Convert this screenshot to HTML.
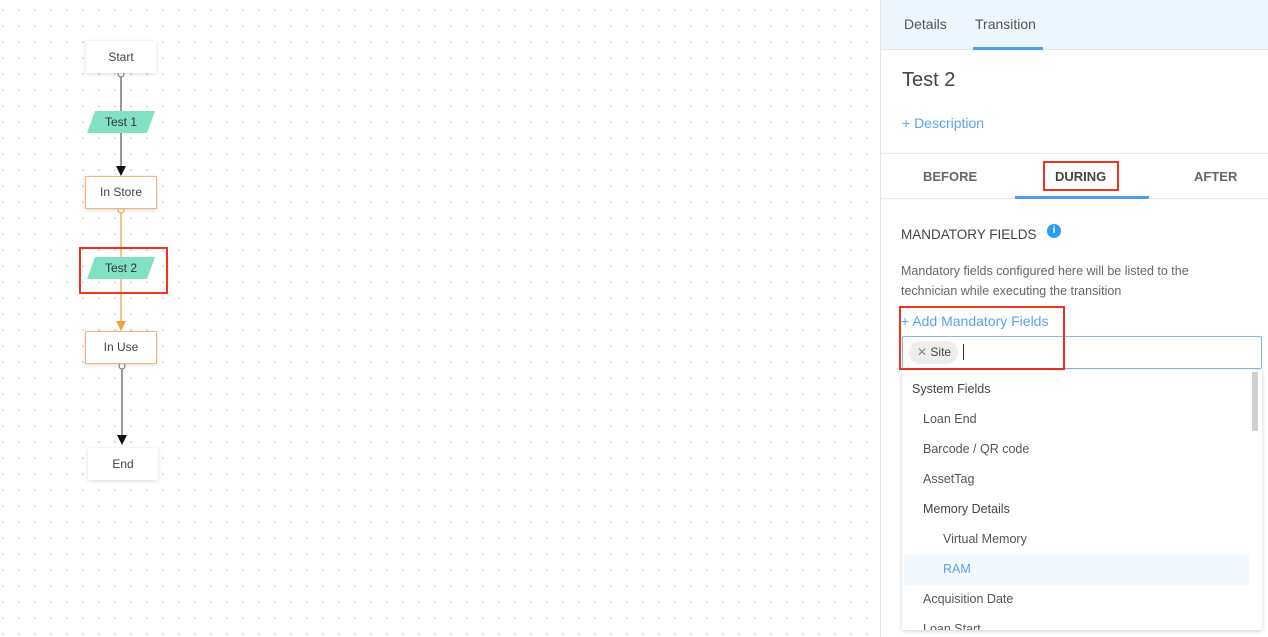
<!DOCTYPE html>
<html><head><style>
*{box-sizing:border-box;margin:0;padding:0}
body{width:1268px;height:637px;overflow:hidden;font-family:"Liberation Sans",sans-serif;background:#fff;position:relative}
.canvas{position:absolute;left:0;top:0;width:880px;height:637px;background-color:#fff;background-image:radial-gradient(circle,#d2d2d2 0.8px,transparent 1.1px);background-size:16px 16px;background-position:-5px 2px}
.node{position:absolute;background:#fff;font-size:12px;color:#444;text-align:center;box-shadow:0 1px 4px rgba(0,0,0,.15)}
.para{position:absolute;font-size:12px;color:#333;text-align:center;line-height:22px;height:22px}
.para:before{content:"";position:absolute;inset:0;background:#82e0c4;transform:skewX(-20deg);z-index:-1}
.para{z-index:1}
.panel{position:absolute;left:880px;top:0;width:388px;height:637px;background:#fff;border-left:1px solid #e6e6e6}
.red{position:absolute;border:2px solid #f0321e}
.t{position:absolute;white-space:nowrap}
</style></head><body>
<div class="canvas"></div>
<svg style="position:absolute;left:0;top:0" width="880" height="637">
<line x1="121" y1="72" x2="121" y2="168" stroke="#777" stroke-width="1.5"/>
<polygon points="116,166 126,166 121,176" fill="#111"/>
<circle cx="121" cy="74" r="3" fill="#fff" stroke="#777"/>
<line x1="121" y1="209" x2="121" y2="323" stroke="#f0a04a" stroke-width="1.3"/>
<polygon points="116,321 126,321 121,331" fill="#f0a04a"/>
<circle cx="121" cy="210" r="3" fill="#fff" stroke="#f0a04a"/>
<line x1="122" y1="364" x2="122" y2="437" stroke="#777" stroke-width="1.5"/>
<polygon points="117,435 127,435 122,445" fill="#111"/>
<circle cx="122" cy="366" r="3" fill="#fff" stroke="#777"/>
</svg>
<div class="node" style="left:86px;top:41px;width:70px;height:32px;line-height:32px">Start</div>
<div class="para" style="left:91px;top:111px;width:60px">Test 1</div>
<div class="node" style="left:85px;top:176px;width:72px;height:33px;line-height:31px;border:1.5px solid #f5b37a">In Store</div>
<div class="para" style="left:91px;top:257px;width:60px">Test 2</div>
<div class="red" style="left:79px;top:247px;width:89px;height:47px"></div>
<div class="node" style="left:85px;top:331px;width:72px;height:33px;line-height:31px;border:1.5px solid #f5b37a">In Use</div>
<div class="node" style="left:88px;top:448px;width:70px;height:32px;line-height:32px">End</div>

<div class="panel">
<div style="position:absolute;left:0;top:0;width:388px;height:50px;background:#eef7fe;border-bottom:1px solid #e3e8ec"></div>
<div class="t" style="left:23px;top:16px;font-size:14px;color:#555">Details</div>
<div class="t" style="left:94px;top:16px;font-size:14px;color:#555">Transition</div>
<div style="position:absolute;left:92px;top:47px;width:70px;height:3px;background:#4a9de6"></div>
<div class="t" style="left:21px;top:69px;font-size:20px;color:#444">Test 2</div>
<div class="t" style="left:21px;top:115px;font-size:14px;color:#5aa3e8">+ Description</div>
<div style="position:absolute;left:0;top:153px;width:388px;height:1px;background:#ececec"></div>
<div style="position:absolute;left:0;top:198px;width:388px;height:1px;background:#ececec"></div>
<div class="t" style="left:42px;top:169px;font-size:13px;font-weight:bold;color:#666">BEFORE</div>
<div class="t" style="left:174px;top:169px;font-size:13px;font-weight:bold;color:#444">DURING</div>
<div class="t" style="left:313px;top:169px;font-size:13px;font-weight:bold;color:#666">AFTER</div>
<div style="position:absolute;left:134px;top:196px;width:134px;height:3px;background:#4a9de6"></div>
<div class="red" style="left:162px;top:161px;width:76px;height:30px"></div>
<div class="t" style="left:20px;top:227px;font-size:13.5px;color:#444">MANDATORY FIELDS</div>
<div style="position:absolute;left:166px;top:224px;width:14px;height:14px;border-radius:50%;background:#2a9df4;color:#fff;font-size:10px;font-weight:bold;text-align:center;line-height:14px">i</div>
<div class="t" style="left:20px;top:261px;font-size:12.5px;color:#666;line-height:20px">Mandatory fields configured here will be listed to the<br>technician while executing the transition</div>
<div class="t" style="left:20px;top:313px;font-size:14px;color:#5aa3e8">+ Add Mandatory Fields</div>
<div style="position:absolute;left:21px;top:336px;width:360px;height:33px;border:1px solid #7fb8ee;border-radius:2px"></div>
<div style="position:absolute;left:28px;top:341px;width:49px;height:23px;border-radius:12px;background:#eee;font-size:12px;color:#444;line-height:23px;padding-left:8px"><span style="color:#888">✕</span> Site</div>
<div style="position:absolute;left:82px;top:344px;width:1px;height:16px;background:#333"></div>
<div class="red" style="left:18px;top:306px;width:166px;height:64px"></div>
<div style="position:absolute;left:21px;top:370px;width:360px;height:260px;background:#fff;box-shadow:0 1px 4px rgba(0,0,0,.2);border-radius:2px;overflow:hidden;font-size:12.5px;color:#555">
<div style="position:absolute;left:350px;top:2px;width:6px;height:59px;background:#cfcfd4"></div>
<div class="t" style="left:10px;top:12px;color:#444">System Fields</div>
<div class="t" style="left:21px;top:42px">Loan End</div>
<div class="t" style="left:21px;top:72px">Barcode / QR code</div>
<div class="t" style="left:21px;top:102px">AssetTag</div>
<div class="t" style="left:21px;top:132px;color:#444">Memory Details</div>
<div class="t" style="left:41px;top:162px">Virtual Memory</div>
<div style="position:absolute;left:2px;top:185px;width:345px;height:30px;background:#f2f9fe"></div>
<div class="t" style="left:41px;top:192px;color:#5aa3e8">RAM</div>
<div class="t" style="left:21px;top:222px">Acquisition Date</div>
<div class="t" style="left:21px;top:252px">Loan Start</div>
</div>
</div>
</body></html>
